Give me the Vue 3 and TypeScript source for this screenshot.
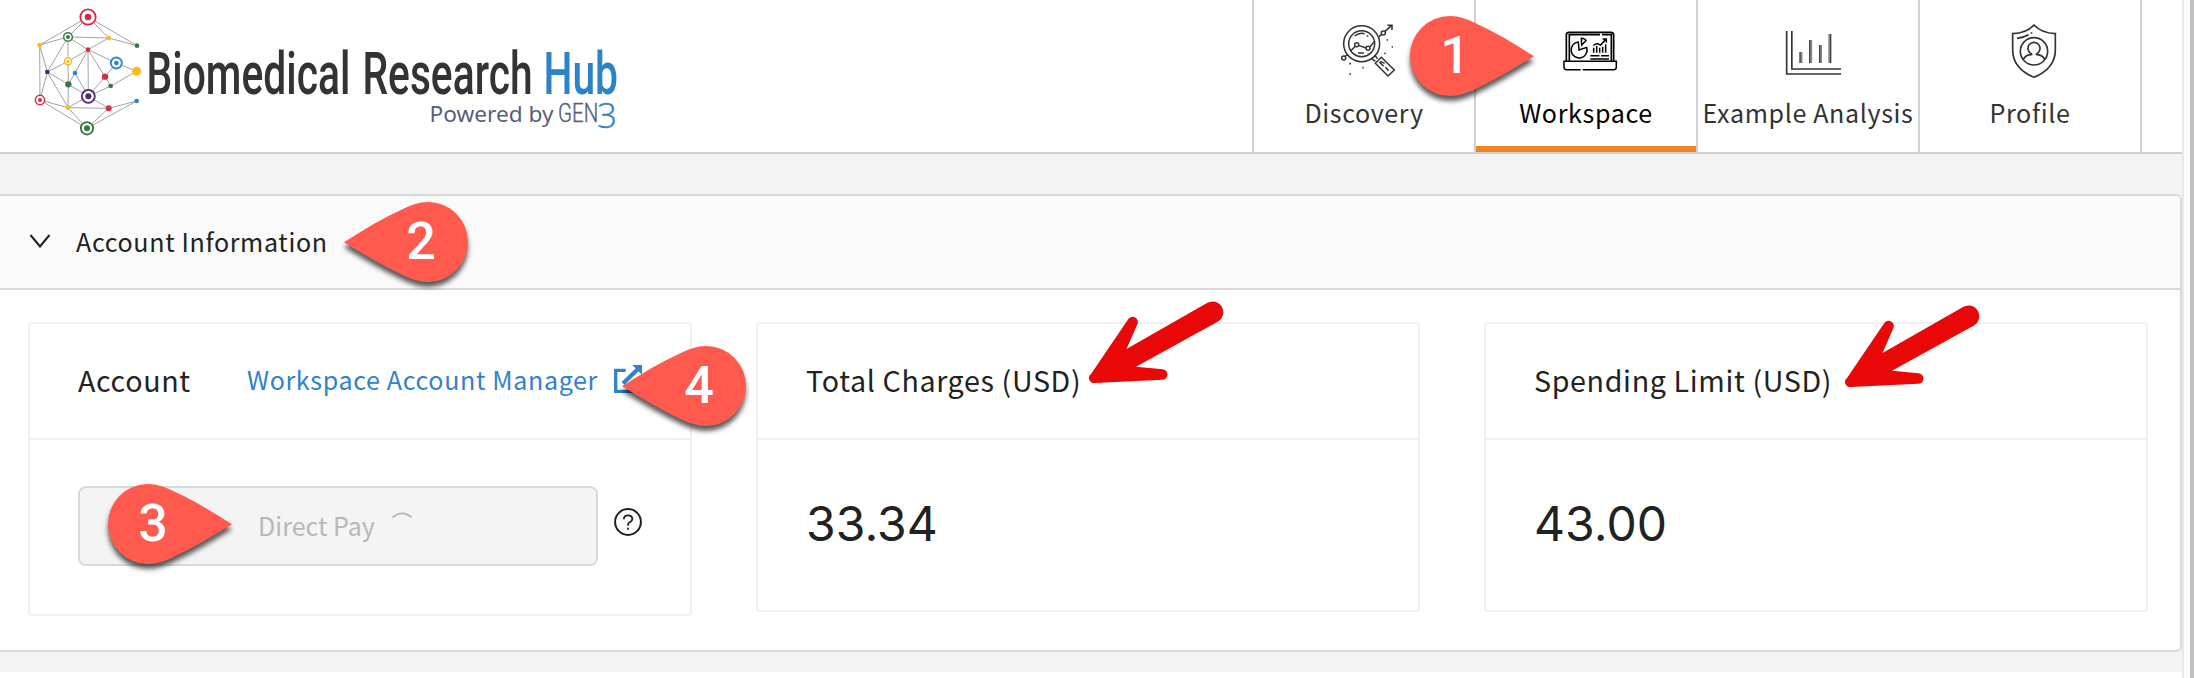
<script setup lang="ts">
interface Pin { n: number; x: number; y: number; dir: 'left' | 'right' }
interface Node { x: number; y: number; r: number; c: string; ring?: number }

const RED = '#db2a45'
const GREEN = '#36793f'
const YELLOW = '#fdba17'
const PURPLE = '#532a72'
const BLUE = '#2d83c9'

const nodes: Node[] = [
  { x: 204, y: 51, r: 10, c: RED, ring: 23 },
  { x: 144, y: 111, r: 6, c: GREEN, ring: 13 },
  { x: 266, y: 114, r: 7, c: YELLOW },
  { x: 59, y: 135, r: 7, c: YELLOW },
  { x: 351, y: 137, r: 7, c: GREEN },
  { x: 204, y: 149, r: 7, c: RED },
  { x: 144, y: 184, r: 5, c: YELLOW, ring: 10.5 },
  { x: 289, y: 189, r: 7, c: BLUE, ring: 16.5 },
  { x: 82, y: 216, r: 7, c: PURPLE },
  { x: 165, y: 219, r: 7, c: BLUE },
  { x: 350, y: 214, r: 13.5, c: YELLOW },
  { x: 255, y: 230, r: 9.5, c: RED },
  { x: 145, y: 253, r: 9.5, c: GREEN },
  { x: 272, y: 258, r: 7, c: GREEN },
  { x: 205, y: 289, r: 9, c: PURPLE, ring: 19.5 },
  { x: 60, y: 300, r: 6, c: RED, ring: 14 },
  { x: 350, y: 303, r: 7, c: BLUE },
  { x: 144, y: 323, r: 7, c: YELLOW },
  { x: 266, y: 325, r: 9, c: RED },
  { x: 201, y: 385, r: 9, c: GREEN, ring: 18.5 },
]

const links: [number, number][] = [
  [0, 3], [0, 1], [0, 2], [0, 4], [1, 2], [1, 3], [1, 8], [1, 5], [1, 6], [2, 4], [2, 5],
  [3, 15], [3, 8], [5, 6], [5, 9], [5, 14], [5, 11], [5, 7], [6, 8], [6, 12], [8, 12],
  [8, 15], [8, 17], [9, 12], [9, 14], [12, 14], [12, 17], [7, 11], [11, 14], [7, 10],
  [10, 13], [13, 14], [11, 13], [14, 17], [14, 18], [17, 18], [15, 17], [15, 19],
  [17, 19], [18, 19], [18, 16], [16, 19],
]

const nav = [
  { id: 'discovery', label: 'Discovery', box: '267 60 210 180' },
  { id: 'workspace', label: 'Workspace', box: '933 60 210 180' },
  { id: 'analysis', label: 'Example Analysis', box: '249 60 210 180' },
  { id: 'profile', label: 'Profile', box: '915 60 210 180' },
]
const active = 'workspace'

const stats = [
  { title: 'Total Charges (USD)', value: '33.34' },
  { title: 'Spending Limit (USD)', value: '43.00' },
]

const pins: Pin[] = [
  { n: 1, x: 1410, y: 16, dir: 'right' },
  { n: 2, x: 344, y: 202, dir: 'left' },
  { n: 3, x: 108, y: 484, dir: 'right' },
  { n: 4, x: 622, y: 346, dir: 'left' },
]
const arrows = [
  { x: 1085.5, y: 298 },
  { x: 1841.5, y: 302 },
]
const place = (p: { x: number; y: number }) => ({ left: `${p.x}px`, top: `${p.y}px` })
</script>

<template>
  <div class="screen">
    <div class="page">
      <header class="header">
        <svg class="logo" width="640" height="150" viewBox="0 0 640 150">
          <g transform="translate(20 0) scale(0.33333)">
            <line
              v-for="([a, b], i) in links" :key="i"
              :x1="nodes[a].x" :y1="nodes[a].y" :x2="nodes[b].x" :y2="nodes[b].y"
              stroke="#a3a3a3" stroke-width="3"
            />
            <template v-for="(n, i) in nodes" :key="i">
              <circle v-if="n.ring" :cx="n.x" :cy="n.y" :r="n.ring" fill="#fff" :stroke="n.c" :stroke-width="n.ring > 16 ? 5.5 : 4.5" />
              <circle :cx="n.x" :cy="n.y" :r="n.r" :fill="n.c" />
            </template>
          </g>
          <g transform="translate(0 94) scale(0.69 1)">
            <text class="brand" x="212.3" y="0" textLength="295.6" lengthAdjust="spacingAndGlyphs">Biomedical</text>
            <text class="brand" x="525.3" y="0" textLength="246.5" lengthAdjust="spacingAndGlyphs">Research</text>
            <text class="brand hub" x="787.7" y="0" textLength="108" lengthAdjust="spacingAndGlyphs">Hub</text>
          </g>
          <text class="powered" x="429.6" y="122" textLength="124" lengthAdjust="spacingAndGlyphs">Powered by</text>
          <g transform="translate(558 122) scale(0.82 1)">
            <text class="gen" x="0" y="0" textLength="49" lengthAdjust="spacingAndGlyphs">GEN</text>
          </g>
          <text class="three" x="597" y="127.7" textLength="20" lengthAdjust="spacingAndGlyphs">3</text>
        </svg>

        <nav class="nav">
          <a v-for="item in nav" :key="item.id" class="tab" :class="{ active: item.id === active }">
            <svg class="tab-icon" width="70" height="60" :viewBox="item.box" fill="none" stroke="currentColor" stroke-width="4.5">
              <template v-if="item.id === 'discovery'">
                <circle cx="365" cy="131" r="54" />
                <circle cx="365" cy="131" r="39" />
                <circle cx="350" cy="134" r="6" />
                <circle cx="384" cy="145" r="6" />
                <path d="M331 154L346 139M356 136L378 144M389 140L405 124M344 108Q358 97 374 101M380 107l5 2M354 159h18" />
                <circle cx="311" cy="174" r="6" />
                <path d="M315 169L324 163M417 110L425 103M434 95L455 76M442 76h14v14" />
                <circle cx="430" cy="99" r="6" />
                <path d="M404 166L413 176M394 174L406 184M424 172L463 210L444 228L406 190ZM418 186L431 199M421 184L434 190M436 202L446 212" />
                <path d="M440 120h4M455 141h4M433 160h4M328 191h5M367 203h4M328 222h5" stroke-width="5" />
              </template>
              <template v-else-if="item.id === 'workspace'">
                <path d="M979 184V105q0-8 8-8H1113q8 0 8 8V184M988 184V104H1080M1086 104H1114V184" stroke-width="5" />
                <path d="M1022 209H980q-8 0-8-8V184H1129V201q0 8-8 8H1028" stroke-width="4.5" />
                <path d="M1015 126A24 24 0 1 0 1040 142L1017 150ZM1024 115Q1036 116 1038 122L1025 135Z" />
                <path d="M1061 143V158M1070 138V158M1079 143V158M1088 140V158M1097 133V158M1060 136L1071 131L1082 135L1098 117M1088 117h11v11" />
                <path d="M1051 167H1078M1083 167H1107M1051 177H1107" />
              </template>
              <template v-else-if="item.id === 'analysis'">
                <path d="M290 93V222H453M305.5 93V207H453" stroke-width="5" />
                <path d="M333 156V189M362 120V189M391.500 135V189M419.500 102V189" stroke="#858585" stroke-width="9" />
                <path d="M330 156V189M359 120V189M389 135V189M422 102V189" stroke-width="3" />
              </template>
              <template v-else>
                <path d="M1032 75Q1010 99 968 101V150Q968 205 1032 232Q1096 205 1096 150V101Q1054 99 1032 75Z" stroke-width="5" />
                <circle cx="1032" cy="154" r="41" stroke-width="5" />
                <path d="M1024 166V161A18 18 0 1 1 1040 161V166M1000 178Q1006 164 1027 163M1064 178Q1058 164 1037 163" stroke-width="5" />
                <path d="M981 115Q1002 112 1016 104M1022 99h5" stroke-width="5" />
              </template>
            </svg>
            <span class="tab-label">{{ item.label }}</span>
          </a>
        </nav>
      </header>

      <main class="main">
        <section class="collapse">
          <div class="collapse-head">
            <svg width="22" height="14" viewBox="0 0 22 14" fill="none" stroke="#1f1f1f" stroke-width="2">
              <path d="M1.500 1L11 12.500L20.500 1" />
            </svg>
            <span>Account Information</span>
          </div>
          <div class="cards">
            <article class="card account">
              <div class="card-head">
                <h3 class="title">Account</h3>
                <a class="manager">
                  Workspace Account Manager
                  <svg width="28" height="28" viewBox="0 0 28 28" fill="none" stroke="currentColor" stroke-width="3.300">
                    <path d="M11.700 5.400H1.700V26.300H24.500V16.500" />
                    <path d="M9 18.500L24.500 3.500" stroke-width="4.200" />
                    <path d="M18.300 0H28V9.700Z" fill="currentColor" stroke="none" />
                  </svg>
                </a>
              </div>
              <div class="card-body pay">
                <button class="select" disabled>
                  <span>Direct Pay</span>
                  <svg width="28" height="28" viewBox="0 0 28 28" fill="none" stroke="#b8b8b8" stroke-width="1.800">
                    <path d="M4.500 6.600Q14 -1.600 23.500 6.200" />
                  </svg>
                </button>
                <svg class="help" width="28" height="28" viewBox="0 0 28 28" fill="none" stroke="#1f1f1f" stroke-width="2">
                  <circle cx="14" cy="14" r="12.900" />
                  <path d="M9.800 11.200C9.800 8.700 11.500 7.400 14 7.400s4.300 1.400 4.300 3.600c0 2.200-1.600 2.700-2.700 3.300-1.100.6-1.600 1.300-1.600 2.500v1M14 19.700v2" stroke-width="1.800" />
                </svg>
              </div>
            </article>
            <article v-for="s in stats" :key="s.title" class="card">
              <div class="card-head"><h3 class="title">{{ s.title }}</h3></div>
              <div class="card-body"><span class="value">{{ s.value }}</span></div>
            </article>
          </div>
        </section>
      </main>
    </div>
    <div class="scrollbar"></div>

    <div v-for="p in pins" :key="p.n" class="pin" :class="p.dir" :style="place(p)">
      <svg width="124" height="80" viewBox="0 0 124 80">
        <path d="M40 0C49 0 57 3 64 6.500C85 16 105 28 124 40.300C105 52 85 64 64 73.800C57 77 49 80 40 80A40 40 0 0 1 40 0Z" fill="#ff5a4d" />
      </svg>
      <span class="digit">{{ p.n }}</span>
    </div>
    <svg v-for="a in arrows" :key="a.x" class="arrow" :style="place(a)" width="140" height="90" viewBox="0 0 140 90">
      <path d="M5 76L42 21.500A5.200 5.200 0 0 1 51.200 26.500L40.500 51L121 5A10.600 10.600 0 0 1 132 23.500L50 68.700L76.500 71.300A5.200 5.200 0 0 1 76 81.800L9 84.900A5 5 0 0 1 5 76Z" fill="#e90707" />
    </svg>
  </div>
</template>

<style>
body {
  margin: 0;
  background: #fff;
}
</style>

<style scoped>
.screen {
  position: relative;
  display: flex;
  width: 2194px;
  height: 678px;
  overflow: hidden;
  font-family: "Noto Sans CJK SC", "Noto Sans", sans-serif;
  font-size: 25.07px;
  line-height: 36px;
  letter-spacing: 0.64px;
  color: #222;
}
.page {
  flex: 1;
}
.scrollbar {
  box-sizing: border-box;
  width: 12px;
  background: #fafafa;
  border-left: 2px solid #e8e8e8;
  border-right: 4px solid #c1c1c1;
}
.header {
  display: flex;
  justify-content: space-between;
  height: 152px;
  padding-right: 40px;
  background: #fff;
  border-bottom: 2px solid #d1d1d1;
}
.logo {
  letter-spacing: 0;
}
.brand {
  font: 500 59px Roboto, sans-serif;
  fill: #333;
}
.hub {
  fill: #2d83c9;
}
.powered {
  font: 21px "Noto Sans", sans-serif;
  fill: #555f7a;
}
.gen {
  font: 300 25px Roboto, sans-serif;
  fill: #555f7a;
  stroke: #555f7a;
  stroke-width: 0.4px;
}
.three {
  font: 300 34px "Open Sans", sans-serif;
  fill: #2d83c9;
  stroke: #2d83c9;
  stroke-width: 0.4px;
}
.nav {
  display: flex;
  border-right: 2px solid #d1d1d1;
}
.tab {
  box-sizing: border-box;
  display: flex;
  flex-direction: column;
  align-items: center;
  width: 222px;
  padding-top: 20px;
  border-left: 2px solid #d1d1d1;
  color: #333;
  white-space: nowrap;
}
.tab.active {
  color: #000;
  box-shadow: inset 0 -6px #ef8523;
}
.tab-label {
  margin-top: 14px;
}
.main {
  height: 478px;
  padding: 40px 0 0;
  box-sizing: content-box;
  background: #f4f4f4;
}
.collapse {
  box-sizing: border-box;
  height: 458px;
  border: 2px solid #d9d9d9;
  border-left: 0;
  border-radius: 0 6px 6px 0;
  background: #fff;
  overflow: hidden;
}
.collapse-head {
  box-sizing: border-box;
  display: flex;
  align-items: center;
  gap: 25px;
  height: 94px;
  padding: 0 0 2px 29px;
  background: #fafafa;
  border-bottom: 2px solid #d9d9d9;
}
.cards {
  display: flex;
  align-items: flex-start;
  gap: 64px;
  padding: 32px 32px 0 28px;
}
.card {
  box-sizing: border-box;
  width: 664px;
  height: 290px;
  border: 2px solid #f0f0f0;
  border-radius: 4px;
}
.account {
  height: 294px;
}
.card-head {
  box-sizing: border-box;
  display: flex;
  align-items: center;
  justify-content: space-between;
  height: 116px;
  padding: 0 48px 4px;
  border-bottom: 2px solid #f0f0f0;
}
.title {
  margin: 0;
  font-size: 28.65px;
  font-weight: 400;
  line-height: 41px;
}
.manager {
  display: flex;
  align-items: center;
  gap: 16px;
  color: #2f82cb;
}
.card-body {
  box-sizing: border-box;
  display: flex;
  align-items: center;
  height: 170px;
  padding: 0 48px 3px;
}
.card-body.pay {
  align-items: flex-start;
  gap: 16px;
  padding-top: 46px;
}
.select {
  box-sizing: border-box;
  display: flex;
  align-items: center;
  justify-content: center;
  gap: 13px;
  width: 520px;
  height: 80px;
  padding: 0 2px 2px 0;
  border: 2px solid #d9d9d9;
  border-radius: 8px;
  background: #f4f4f4;
  color: #b8b8b8;
  font: inherit;
  letter-spacing: 0;
}
.help {
  margin-top: 22px;
}
.value {
  font: 48px/59px Inter, sans-serif;
  letter-spacing: 0.1px;
}
.pin {
  position: absolute;
  width: 124px;
  height: 80px;
}
.pin svg {
  display: block;
  filter: drop-shadow(0 5px 2.500px rgba(0, 0, 0, 0.65));
  overflow: visible;
}
.pin.left svg {
  transform: scaleX(-1);
}
.digit {
  position: absolute;
  top: 10px;
  left: 25px;
  width: 40px;
  font: 500 52px/60px Roboto, sans-serif;
  letter-spacing: 0;
  text-align: center;
  color: #fff;
}
.pin.left .digit {
  left: 57px;
}
.arrow {
  position: absolute;
}
</style>
